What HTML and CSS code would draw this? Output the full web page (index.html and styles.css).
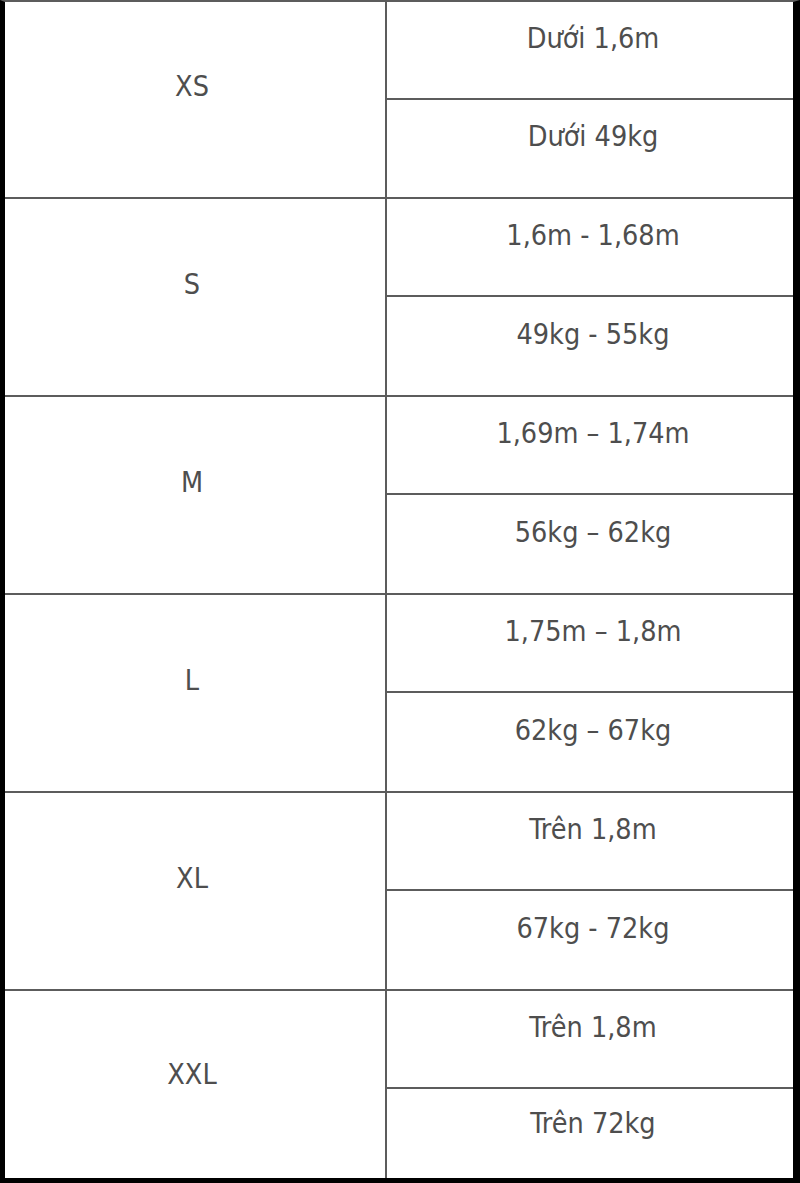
FILE: index.html
```html
<!DOCTYPE html>
<html lang="vi">
<head>
<meta charset="utf-8">
<title>Bảng size</title>
<link rel="stylesheet" href="styles.css">
</head>
<body>
<div class="chart">
  <div class="group">
    <div class="size">XS</div>
    <div class="vals"><div class="val">Dưới 1,6m</div><div class="val">Dưới 49kg</div></div>
  </div>
  <div class="group">
    <div class="size">S</div>
    <div class="vals"><div class="val">1,6m - 1,68m</div><div class="val">49kg - 55kg</div></div>
  </div>
  <div class="group">
    <div class="size">M</div>
    <div class="vals"><div class="val">1,69m – 1,74m</div><div class="val">56kg – 62kg</div></div>
  </div>
  <div class="group">
    <div class="size">L</div>
    <div class="vals"><div class="val">1,75m – 1,8m</div><div class="val">62kg – 67kg</div></div>
  </div>
  <div class="group">
    <div class="size">XL</div>
    <div class="vals"><div class="val">Trên 1,8m</div><div class="val">67kg - 72kg</div></div>
  </div>
  <div class="group last">
    <div class="size">XXL</div>
    <div class="vals"><div class="val">Trên 1,8m</div><div class="val">Trên 72kg</div></div>
  </div>
</div>
</body>
</html>
```
FILE: styles.css
```css
html, body {
  margin: 0;
  padding: 0;
  background: #fff;
}
.chart {
  width: 800px;
  height: 1183px;
  box-sizing: border-box;
  border-top: 2px solid #5c5c5c;
  border-left: 5px solid #000;
  border-right: 7px solid #000;
  border-bottom: 5px solid #000;
  display: flex;
  flex-direction: column;
  font-family: "DejaVu Sans Condensed", "DejaVu Sans", sans-serif;
  font-size: 28.5px;
  color: #4e4e4e;
}
.group {
  display: flex;
  height: 198px;
  flex: none;
  box-sizing: border-box;
  border-bottom: 2px solid #5c5c5c;
}
.group:first-child {
  height: 197px;
}
.group.last {
  flex: 1;
  height: auto;
  border-bottom: none;
}
.size {
  width: 380px;
  display: flex;
  align-items: center;
  justify-content: center;
  padding: 0 6px 26px 0;
  box-sizing: border-box;
}
.vals {
  flex: 1;
  border-left: 2px solid #5c5c5c;
  display: flex;
  flex-direction: column;
}
.val {
  flex: 1;
  display: flex;
  align-items: center;
  justify-content: center;
  padding: 0 0 24px 6px;
  box-sizing: border-box;
}
.val:first-child {
  flex: none;
  height: 96px;
}
.val + .val {
  border-top: 2px solid #5c5c5c;
}
.last .size, .last .val + .val {
  padding-bottom: 20px;
}
```
